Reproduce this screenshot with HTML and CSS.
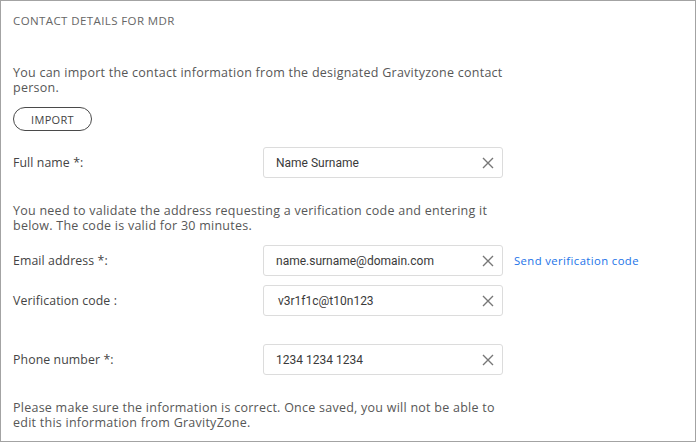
FILE: index.html
```html
<!DOCTYPE html>
<html>
<head>
<meta charset="utf-8">
<link rel="stylesheet" href="styles.css">
</head>
<body>
<div class="panel">
  <div class="title">CONTACT DETAILS FOR MDR</div>
  <p class="note intro">You can import the contact information from the designated Gravityzone contact person.</p>
  <button class="import">IMPORT</button>
  <div class="row row-name">
    <label class="label">Full name *:</label>
    <div class="field"><span class="value">Name Surname</span><svg class="clear" viewBox="0 0 12 12"><path d="M1 1L11 11M11 1L1 11"/></svg></div>
  </div>
  <p class="note validate">You need to validate the address requesting a verification code and entering it below. The code is valid for 30 minutes.</p>
  <div class="row row-email">
    <label class="label">Email address *:</label>
    <div class="field"><span class="value">name.surname@domain.com</span><svg class="clear" viewBox="0 0 12 12"><path d="M1 1L11 11M11 1L1 11"/></svg></div>
    <a class="link" href="#">Send verification code</a>
  </div>
  <div class="row row-code">
    <label class="label">Verification code :</label>
    <div class="field"><span class="value code">v3r1f1c@t10n123</span><svg class="clear" viewBox="0 0 12 12"><path d="M1 1L11 11M11 1L1 11"/></svg></div>
  </div>
  <div class="row row-phone">
    <label class="label">Phone number *:</label>
    <div class="field"><span class="value">1234 1234 1234</span><svg class="clear" viewBox="0 0 12 12"><path d="M1 1L11 11M11 1L1 11"/></svg></div>
  </div>
  <p class="note final">Please make sure the information is correct. Once saved, you will not be able to edit this information from GravityZone.</p>
</div>
</body>
</html>
```
FILE: styles.css
```css
html, body {
  margin: 0;
  padding: 0;
  background: #fff;
}
.panel {
  box-sizing: border-box;
  width: 696px;
  height: 442px;
  border: 1px solid #a3a3a3;
  padding: 0 12px;
  font-family: "Open Sans", "DejaVu Sans", sans-serif;
  color: #555;
}
.title {
  padding-top: 12px;
  font-size: 11.5px;
  line-height: 16px;
  color: #666;
  letter-spacing: 0.4px;
  font-weight: 500;
}
.note {
  margin: 0;
  font-size: 12.5px;
  line-height: 15px;
  letter-spacing: 0.25px;
  color: #575757;
  width: 496px;
}
.intro { margin-top: 36px; }
.import {
  display: block;
  margin-top: 12px;
  box-sizing: border-box;
  width: 79px;
  height: 24px;
  border: 1px solid #4a4a4a;
  border-radius: 12px;
  background: #fff;
  font-family: inherit;
  font-size: 11px;
  letter-spacing: 0.3px;
  color: #444;
  padding: 0;
}
.row {
  display: flex;
  align-items: center;
}
.label {
  width: 250px;
  font-size: 12.3px;
  letter-spacing: 0.1px;
  color: #444;
}
.field {
  box-sizing: border-box;
  width: 240px;
  height: 31px;
  border: 1px solid #dcdcdc;
  border-radius: 3px;
  display: flex;
  align-items: center;
  justify-content: space-between;
  padding: 0 8px 0 12px;
}
.value {
  font-family: Roboto, "Liberation Sans", sans-serif;
  font-size: 12px;
  color: #3a3a3a;
}
.value.code { padding-left: 2px; }
.clear {
  width: 12px;
  height: 12px;
  stroke: #777;
  stroke-width: 1.4;
  fill: none;
}
.link {
  margin-left: 11px;
  font-size: 11.3px;
  letter-spacing: 0.4px;
  color: #1a73e8;
  text-decoration: none;
}
.row-name { margin-top: 16px; }
.validate { margin-top: 25px; }
.row-email { margin-top: 12px; }
.row-code { margin-top: 9px; }
.row-phone { margin-top: 28px; }
.final { margin-top: 25px; }
```
